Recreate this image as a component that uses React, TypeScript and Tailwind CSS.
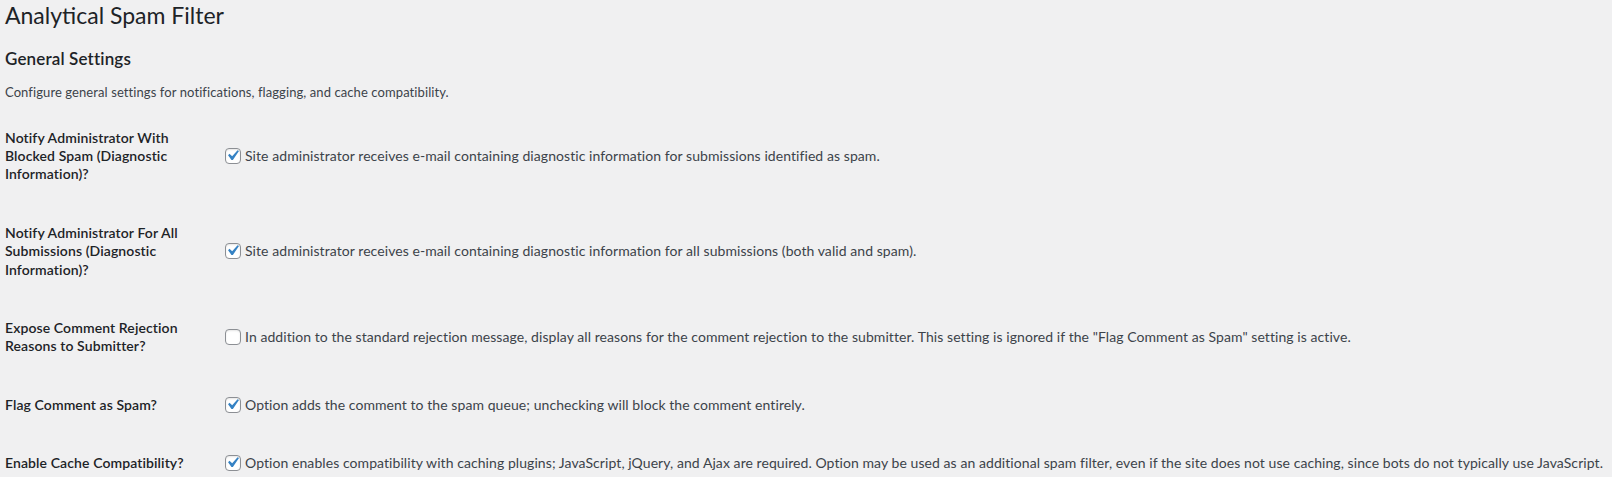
import React from "react";

const Check = ({ checked }: { checked: boolean }) => (
  <span className="relative inline-block w-4 h-4 shrink-0 rounded-[4px] border border-[#8c8f94] bg-white mr-1 shadow-[inset_0_1px_2px_rgba(0,0,0,0.1)]">
    {checked && (
      <svg viewBox="0 0 20 20" className="absolute w-[21px] h-[21px] -left-[4px] -top-[4px]">
        <path d="M14.83 4.89l1.34.94-5.81 8.38H9.02L5.78 9.67l1.34-1.25 2.57 2.4z" fill="#3582c4" />
      </svg>
    )}
  </span>
);

type Row = { label: React.ReactNode; text: string; checked: boolean };

const rows: Row[] = [
  {
    label: (
      <>
        Notify Administrator With
        <br />
        Blocked Spam (Diagnostic
        <br />
        Information)?
      </>
    ),
    text: "Site administrator receives e-mail containing diagnostic information for submissions identified as spam.",
    checked: true,
  },
  {
    label: (
      <>
        Notify Administrator For All
        <br />
        Submissions (Diagnostic
        <br />
        Information)?
      </>
    ),
    text: "Site administrator receives e-mail containing diagnostic information for all submissions (both valid and spam).",
    checked: true,
  },
  {
    label: (
      <>
        Expose Comment Rejection
        <br />
        Reasons to Submitter?
      </>
    ),
    text: 'In addition to the standard rejection message, display all reasons for the comment rejection to the submitter. This setting is ignored if the "Flag Comment as Spam" setting is active.',
    checked: false,
  },
  {
    label: <>Flag Comment as Spam?</>,
    text: "Option adds the comment to the spam queue; unchecking will block the comment entirely.",
    checked: true,
  },
  {
    label: <>Enable Cache Compatibility?</>,
    text: "Option enables compatibility with caching plugins; JavaScript, jQuery, and Ajax are required. Option may be used as an additional spam filter, even if the site does not use caching, since bots do not typically use JavaScript.",
    checked: true,
  },
];

export default function App() {
  return (
    <div className="min-h-[477px] bg-[#f0f0f1] pl-[5px] text-[#1d2327] font-['Lato','Liberation_Sans',sans-serif] overflow-hidden">
      <h1 className="text-[23px] leading-[30px] font-normal m-0">Analytical Spam Filter</h1>
      <h2 className="text-[17px] leading-[22px] font-semibold mt-[18px] tracking-[0.15px]">General Settings</h2>
      <p className="text-[13px] leading-[19.5px] text-[#3c434a] mt-[13px] tracking-[0.09px]">
        Configure general settings for notifications, flagging, and cache compatibility.
      </p>
      <div className="mt-[6px] flex flex-col">
        {rows.map((r, i) => (
          <div key={i} className="flex items-center">
            <div className="w-[210px] shrink-0 pr-[10px] py-[20px] text-[14px] leading-[18.4px] font-semibold text-[#1d2327] tracking-[0.1px]">
              {r.label}
            </div>
            <div className="px-[10px] py-[15px] flex items-center text-[14px] leading-[18px] text-[#3c434a] whitespace-nowrap tracking-[0.07px]">
              <Check checked={r.checked} />
              <span>{r.text}</span>
            </div>
          </div>
        ))}
      </div>
    </div>
  );
}
